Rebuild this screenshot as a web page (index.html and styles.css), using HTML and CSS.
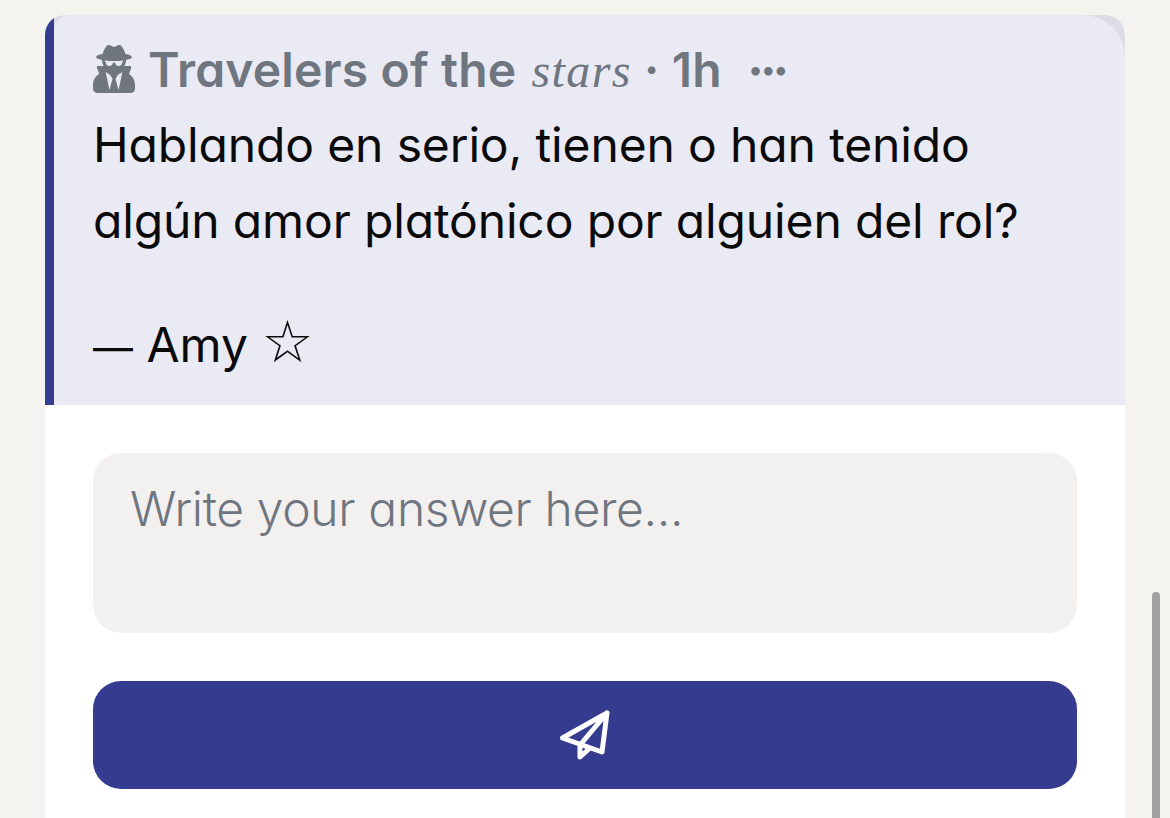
FILE: index.html
```html
<!DOCTYPE html>
<html lang="en">
<head>
    <meta charset="UTF-8">
    <meta name="viewport" content="width=device-width, initial-scale=1.0">
    <title>Travelers of the stars</title>
    <link rel="stylesheet" href="styles.css">
</head>
<body>
    <div class="card">
        <div class="quote">
            <div class="quote-body">
                <div class="meta">
                    <svg class="spy-icon" viewBox="0 0 448 512" aria-hidden="true"><path d="M383.9 308.3l23.9-62.6c4-10.5-3.7-21.7-15-21.7h-58.5c11-18.9 17.8-40.6 17.8-64v-.3c39.2-7.8 64-19.1 64-31.7 0-13.3-27.3-25.1-70.1-33-9.2-32.8-27-65.8-40.6-82.8-9.5-11.9-25.9-15.6-39.5-8.8l-27.6 13.8c-9 4.5-19.6 4.5-28.6 0L182.1 3.4c-13.6-6.8-30-3.1-39.5 8.8-13.5 17-31.4 50-40.6 82.8-42.7 7.9-70 19.7-70 33 0 12.6 24.8 23.9 64 31.7v.3c0 23.4 6.8 45.1 17.8 64H56.3c-11.5 0-19.2 11.7-14.7 22.3l25.8 60.2C27.3 329.8 0 372.7 0 422.4v44.8C0 491.9 20.1 512 44.8 512h358.4c24.7 0 44.8-20.1 44.8-44.8v-44.8c0-48.4-25.8-90.4-64.1-114.1zM176 480l-41.6-192 49.6 32 24 40-32 120zm96 0l-32-120 24-40 49.6-32L272 480zm41.7-298.5c-3.9 11.9-7 24.6-16.5 33.4-10.1 9.3-48 22.4-64-25-2.8-8.4-15.4-8.4-18.3 0-17 50.2-56 32.4-64 25-9.5-8.8-12.7-21.5-16.5-33.4-.8-2.5-6.3-5.7-6.3-5.8v-10.8c28.3 3.6 61 5.8 96 5.8s67.7-2.1 96-5.8v10.8c-.1.1-5.6 3.2-6.4 5.8z"/></svg>
                    <span class="meta-name">Travelers of the <em class="meta-stars">stars</em> · 1h</span>
                    <span class="meta-more">•••</span>
                </div>
                <p class="question">Hablando en serio, tienen o han tenido<br>algún amor platónico por alguien del rol?</p>
                <p class="signature"><span class="dash">—</span> Amy <span class="star">☆</span></p>
            </div>
        </div>
        <div class="answer">
            <div class="answer-input">Write your answer here...</div>
            <button class="send-button" type="button" aria-label="Send">
                <svg class="send-icon" viewBox="0 0 60 60" aria-hidden="true"><path d="M52 8 L7.500 33 L47 47 Z M52 8 L25 40 V52 L35 43"/></svg>
            </button>
        </div>
    </div>
    <div class="scroll-thumb"></div>
</body>
</html>
```

FILE: styles.css
```css
* {
    box-sizing: border-box;
}
html, body {
    height: 100%;
}
body {
    margin: 0;
    padding: 15px 45px 0;
    overflow: hidden;
    background-color: #f4f3f0;
    font-family: Inter, "Noto Sans", sans-serif;
    font-feature-settings: "cv11" 1;
    color: #0a0a0a;
}
.card {
    height: 100%;
    background-color: #ffffff;
    border-radius: 20px 20px 0 0;
    overflow: hidden;
}
.quote {
    border-left: 9px solid #353c90;
    background-color: #dcdce5;
}
.quote-body {
    height: 390px;
    padding: 24px 39px 0;
    background-color: #eaeaf4;
    border-radius: 16px 42px 0 0;
}
.meta {
    display: flex;
    align-items: center;
    height: 60px;
    color: #6f7680;
    font-size: 48px;
    font-weight: 600;
}
.spy-icon {
    width: 42px;
    height: 48px;
    margin-right: 13px;
    fill: #6f7680;
}
.meta-name {
    letter-spacing: 0.15px;
}
.meta-stars {
    margin-left: 3px;
    font-family: "Liberation Serif", serif;
    font-weight: 400;
    letter-spacing: 1.4px;
}
.meta-more {
    margin-left: 27px;
    font-size: 27px;
    letter-spacing: -1px;
}
.question {
    margin: 8px 0 0;
    font-size: 48px;
    font-weight: 400;
    letter-spacing: -0.14px;
    line-height: 76px;
}
.signature {
    margin: 48px 0 0;
    font-size: 48px;
    font-weight: 400;
    line-height: 76px;
}
.dash {
    font-size: 40px;
}
.star {
    font-family: "DejaVu Sans", sans-serif;
    font-size: 58px;
    line-height: 0;
}
.answer {
    display: flex;
    flex-direction: column;
    gap: 48px;
    padding: 48px;
}
.answer-input {
    height: 180px;
    padding: 26px 37px;
    background-color: #f3f1f0;
    border-radius: 28px;
    color: #6f7680;
    font-size: 48px;
    font-weight: 300;
    letter-spacing: -0.35px;
    line-height: 60px;
}
.send-button {
    display: flex;
    align-items: center;
    justify-content: center;
    height: 108px;
    padding: 0;
    border: 0;
    background-color: #353c90;
    border-radius: 28px;
}
.send-icon {
    width: 60px;
    height: 60px;
    fill: none;
    stroke: #ffffff;
    stroke-width: 5;
    stroke-linejoin: round;
    stroke-linecap: round;
}
.scroll-thumb {
    position: absolute;
    top: 592px;
    left: 1152px;
    width: 8px;
    height: 240px;
    background-color: #a3a2a0;
    border-radius: 4px;
}
```
